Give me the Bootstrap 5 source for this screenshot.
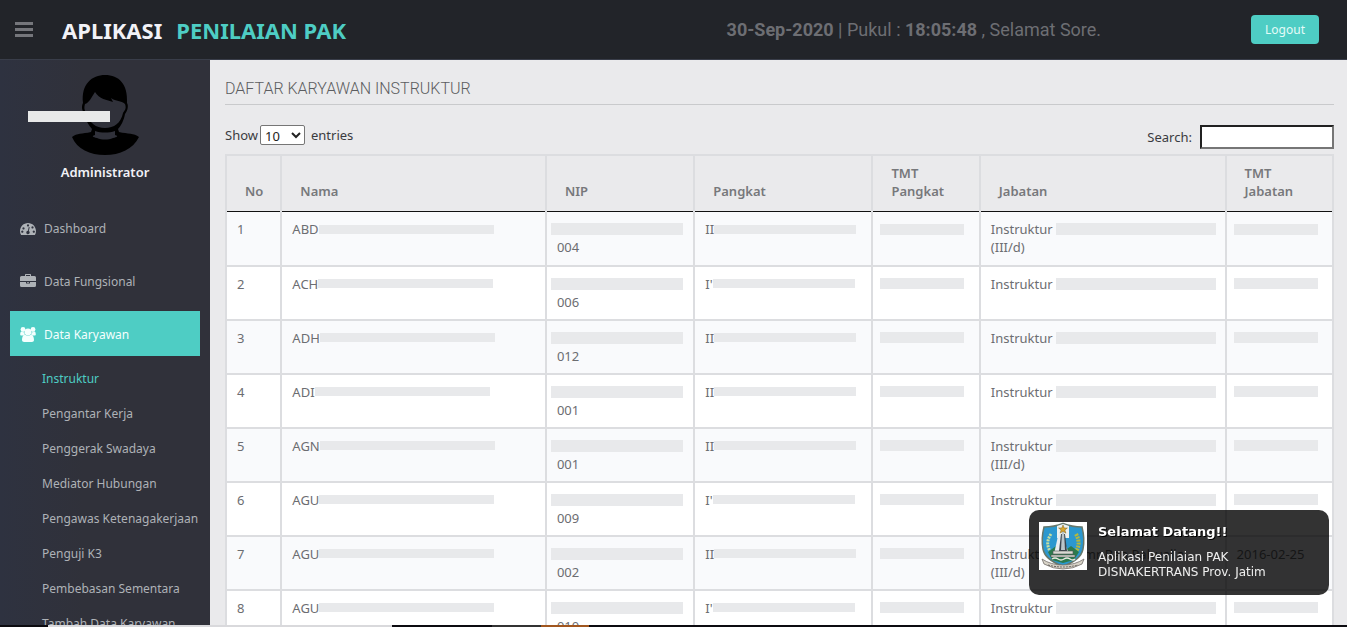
<!DOCTYPE html>
<html lang="id">
<head>
<meta charset="utf-8">
<meta name="viewport" content="width=device-width, initial-scale=1">
<title>Aplikasi Penilaian PAK</title>
<link href="https://cdn.jsdelivr.net/npm/bootstrap@5.3.0/dist/css/bootstrap.min.css" rel="stylesheet">
<style>
  :root { --accent: #4ecdc4; --side: #2f323a; --page: #eaeaec; --line: #dcdde0; }
  body { font-family: "Noto Sans", sans-serif; font-size: 13px; line-height: 18px; background: var(--page); color: #3a3b3f; }
  a { text-decoration: none; }

  .top-bar { height: 60px; background: #222429; border-bottom: 1px solid #393d49; padding: 0 28px 0 15px; }
  .menu-toggle { width: 18px; height: 15px; background: none; border: 0; padding: 0; }
  .menu-toggle span { display: block; height: 3px; background: #75767b; }
  .brand-name { font-size: 22px; font-weight: 700; line-height: 30px; color: #f2f2f7; margin-left: 29px; gap: 14px; }
  .brand-name b { color: var(--accent); font-weight: 700; }
  .clock { font-family: Roboto, sans-serif; font-size: 18px; line-height: 24px; color: #6d6e73; }
  .btn-logout { --bs-btn-bg: #4ecdc4; --bs-btn-color: #e4fbf8; --bs-btn-hover-bg: #3dbbb2; --bs-btn-hover-color: #fff;
    --bs-btn-font-size: 12px; --bs-btn-padding-x: 14px; --bs-btn-padding-y: 5px; line-height: 19px; margin-left: 150px; border: 0; border-radius: 4px; }

  .side-bar { width: 210px; background: linear-gradient(90deg, #2e3240, #30313a 40%); padding: 15px 10px 0; }
  .user-pic { height: 81px; }
  .name-mask { left: 18px; top: 36px; width: 82px; height: 11px; background: #e8e9e9; }
  .user-role { font-weight: 600; color: #f2f2f7; margin: 7px 0 24px; }
  .menu-link { height: 45px; padding: 2px 10px 0; gap: 8px; font-size: 12px; color: #aeb2b7; margin-bottom: 8px; }
  .menu-link svg { width: 16px; height: 16px; fill: currentColor; }
  .menu-link.active { background: var(--accent); color: #f4fffe; margin-bottom: 5px; }
  .sub-menu a { display: block; line-height: 35px; font-size: 12px; padding-left: 32px; white-space: nowrap; color: #aeb2b7; }
  .sub-menu a.active { color: var(--accent); }

  .content-area { padding: 19px 13px 0 15px; scrollbar-width: none; }
  .content-area::-webkit-scrollbar { display: none; }
  .page-title { font-family: Roboto, sans-serif; font-size: 16px; font-weight: 300; line-height: 20px; color: #5c5d60; padding-bottom: 5px; border-bottom: 1px solid #c9cacc; margin-bottom: 20px; }
  .len-label { gap: 2px; }
  .len-select { width: 45px; height: 20px; border: 1px solid #767676; border-radius: 2px; background: #fff; color: #222; padding: 0; }
  .find-box { width: 134px; height: 24px; border: 2px inset #767676; background: #fff; padding: 1px 2px; }

  .staff { table-layout: fixed; margin: 5px 0 0; border: 0; --bs-table-bg: transparent; }
  .staff > :not(caption) > * > * { border: 2px solid var(--line); color: #6c6d71; box-shadow: none; }
  .staff thead th { padding: 8px 18px 11px; border-bottom: 1px solid #111; vertical-align: bottom; font-weight: 600; color: #77787b; }
  .staff tbody td { padding: 8px 10px; height: 54px; background: #fff; }
  .staff tbody tr:nth-child(odd) td { background: #f9fafc; }
  .staff tbody tr:first-child td { border-top: 0; }
  .line-row { display: flex; align-items: center; height: 18px; white-space: nowrap; }
  .mask { background: #e8e9eb; flex: none; height: 11px; }
  .mask-name { width: 175px; height: 9px; }
  .mask-nip { width: 132px; height: 12px; margin-left: -6px; }
  .mask-rank { width: 142px; height: 9px; }
  .mask-date { width: 84px; margin-left: -3px; }
  .mask-post { width: 160px; height: 12px; margin-left: 3px; }

  .greet { right: 18px; bottom: 32px; width: 300px; height: 85px; padding: 12px 10px; gap: 11px; border-radius: 10px;
    background: rgba(0,0,0,.8); color: #eee; font: 11px/15px "DejaVu Sans", sans-serif; z-index: 20; }
  .greet h2 { font: 700 13px/20px "DejaVu Sans", sans-serif; margin: 0 0 8px; color: #fff; text-shadow: 1px 1px #000; }
  .greet p { font-size: 12px; white-space: nowrap; }
  .task-strip { height: 2px; background: #0c0b10; z-index: 30; }
  .task-strip i { display: block; }
</style>
</head>
<body class="vh-100 d-flex flex-column overflow-hidden">

<header class="top-bar d-flex align-items-center flex-shrink-0">
  <button class="menu-toggle d-flex flex-column justify-content-between" type="button" aria-label="Menu"><span class="w-100"></span><span class="w-100"></span><span class="w-100"></span></button>
  <a href="#" class="brand-name d-flex">APLIKASI <b>PENILAIAN PAK</b></a>
  <div class="clock ms-auto"><b>30-Sep-2020</b> | Pukul : <b>18:05:48</b> , Selamat Sore.</div>
  <button class="btn btn-logout" type="button">Logout</button>
</header>

<div class="d-flex flex-grow-1 overflow-hidden">
  <nav class="side-bar flex-shrink-0 overflow-hidden">
    <div class="user-pic position-relative text-center">
      <svg width="80" height="80" viewBox="0 0 80 80" aria-hidden="true">
        <path d="M19 38C16 34 17 30 18 28C16 9 27 0 40 0C54 0 63 9 62 28C64 31 62 37 60 39C59 45 56 51 53 54L54 57C63 59 69 58 74 62C68 74 55 80 40 80C25 80 12 74 7 62C12 58 17 59 26 57L27 54C23 50 21 45 19 38Z"/>
        <path fill="#30313a" d="M20 29C24 28 26 23 30 17C34 24 42 25 48 27L46 23C51 27 56 25 60 29C62 34 59 36 58 38C56 48 49 53 40 53C31 53 24 48 22 38C19 36 19 32 20 29Z"/>
        <path fill="#30313a" d="M30 56C36 58 44 58 50 56L50 60C54 61 52 62 48 63C43 65 37 65 32 63C28 62 26 61 30 60Z"/>
      </svg>
      <span class="name-mask position-absolute"></span>
    </div>
    <div class="user-role text-center">Administrator</div>
    <a href="#" class="menu-link d-flex align-items-center">
      <svg viewBox="0 0 16 16"><path fill-rule="evenodd" d="M8 2C3.600 2 0 5.600 0 10c0 1.500.4 2.900 1.100 4h13.800c.7-1.100 1.100-2.500 1.100-4 0-4.400-3.600-8-8-8zM3.500 6.300a1.100 1.100 0 1 0 .01 0zM8 3.300a1.100 1.100 0 1 0 .01 0zM12.500 5.300a1.100 1.100 0 1 0 .01 0zM2.300 9.500a1.100 1.100 0 1 0 .01 0zM13.800 9.500a1.100 1.100 0 1 0 .01 0zM8.800 6.100l.9.200-.9 3.700a1.700 1.700 0 1 1-.9-.2z"/></svg>Dashboard</a>
    <a href="#" class="menu-link d-flex align-items-center">
      <svg viewBox="0 0 16 16"><path fill-rule="evenodd" d="M5 2V.5L5.500 0h5l.5.500V2h3.500A1.500 1.500 0 0 1 16 3.500V7H0V3.500A1.500 1.500 0 0 1 1.500 2zM6 2h4V1H6zM0 8h6v1.500h4V8h6v3.500a1.500 1.500 0 0 1-1.500 1.500h-13A1.500 1.500 0 0 1 0 11.500zM7 8h2v.7H7z"/></svg>Data Fungsional</a>
    <a href="#" class="menu-link active d-flex align-items-center">
      <svg viewBox="0 0 16 16"><circle cx="3" cy="2.500" r="2.400"/><circle cx="13" cy="2.500" r="2.400"/><circle cx="8" cy="5" r="3.400"/><path d="M.2 7.500C.2 5.500.8 4.500 1.600 4.500c1 .8 1.900.8 2.800.4-.1 1.200.2 2 .9 2.700-.8 0-1.500.3-2 .9H1.500C.7 8.500.2 8.200.2 7.500zM15.800 7.500c0-2-.6-3-1.400-3-1 .8-1.900.8-2.800.4.1 1.200-.2 2-.9 2.700.8 0 1.500.3 2 .9h1.800c.8 0 1.300-.3 1.300-1zM2 13C2 10.300 3 7.800 5.100 7.800c1.800 1.400 4 1.400 5.800 0 2.100 0 3.100 2.500 3.100 5.200 0 1.200-.9 2-2.100 2H4.100C2.900 15 2 14.200 2 13z"/></svg>Data Karyawan</a>
    <div class="sub-menu">
      <a href="#" class="active">Instruktur</a>
      <a href="#">Pengantar Kerja</a>
      <a href="#">Penggerak Swadaya</a>
      <a href="#">Mediator Hubungan</a>
      <a href="#">Pengawas Ketenagakerjaan</a>
      <a href="#">Penguji K3</a>
      <a href="#">Pembebasan Sementara</a>
      <a href="#">Tambah Data Karyawan</a>
    </div>
  </nav>

  <main class="content-area flex-grow-1 overflow-auto">
    <h1 class="page-title">DAFTAR KARYAWAN INSTRUKTUR</h1>
    <div class="d-flex justify-content-between align-items-start">
      <label class="len-label d-flex align-items-center">Show
        <select class="len-select"><option>10</option><option>25</option><option>50</option><option>100</option></select>
        <span class="ms-1">entries</span></label>
      <label class="d-flex align-items-center gap-2">Search: <input type="search" class="find-box"></label>
    </div>
    <table class="table table-bordered staff">
      <colgroup><col style="width:5%"><col style="width:23.9%"><col style="width:13.4%"><col style="width:16.1%"><col style="width:9.7%"><col style="width:22.2%"><col style="width:9.7%"></colgroup>
      <thead><tr><th>No</th><th>Nama</th><th>NIP</th><th>Pangkat</th><th>TMT Pangkat</th><th>Jabatan</th><th>TMT Jabatan</th></tr></thead>
      <tbody id="rows"></tbody>
    </table>
  </main>
</div>

<aside class="greet position-fixed d-flex" role="status">
  <svg width="48" height="48" viewBox="0 0 48 48" class="flex-shrink-0" aria-hidden="true">
    <path fill="#fff" d="M0 0h48v48H0z"/>
    <path fill="#2b98cf" stroke="#66776a" stroke-width="1.500" d="M5 5Q15 5 24 1.500Q33 5 43 5Q46 17 44 27Q42 38 24 44Q6 38 4 27Q2 17 5 5Z"/>
    <path fill="#eef2ef" d="M18 4L24 2L30 4V16H18Z"/>
    <path fill="#d6a62c" stroke="#7c6120" stroke-width=".5" d="M24 3l1.200 3h3.200l-2.500 2 1 3.200-2.900-2-2.900 2 1-3.200-2.500-2h3.200z"/>
    <path fill="none" stroke="#c8df9f" stroke-width="3" stroke-dasharray="2 1" d="M12 12Q5 22 13 32"/>
    <path fill="none" stroke="#b6b83b" stroke-width="4" stroke-dasharray="2 1" d="M37 12Q43 23 35 32"/>
    <path fill="#2c7a4d" d="M9 30L17 24L24 30L32 24L40 30L35 38L24 41L13 38Z"/>
    <path fill="#e9edf0" d="M19 14L22 11L30 32H15Z"/>
    <path fill="#39444d" d="M22 12h4l2 17h-8z"/><path fill="#b9c5ca" d="M23 10h2l1 18h-4z"/>
    <path fill="#d9dad3" stroke="#555" stroke-width=".6" d="M14 29h20v3H14zM12 33h24v2H12z"/>
    <path fill="none" stroke="#e8e8e0" stroke-width="1.500" d="M13 37q3-2 6 0t6 0 6 0 5 0"/>
    <path fill="#d8d3c7" stroke="#726d69" stroke-width=".8" d="M3 37Q12 43 24 43Q36 43 45 37L43 42Q34 47 24 47Q14 47 5 42Z"/>
    <path stroke="#67625e" stroke-dasharray="2 1" d="M9 43Q24 47 39 43" fill="none"/>
  </svg>
  <div><h2>Selamat Datang!!</h2><p class="m-0">Aplikasi Penilaian PAK<br>DISNAKERTRANS Prov. Jatim</p></div>
</aside>

<footer class="task-strip d-flex flex-shrink-0"><i style="width:48px"></i><i style="width:344px;background:#d9d9dc"></i><i style="width:100px"></i><i style="width:49px;background:#333"></i><i style="width:48px;background:#a0561f"></i></footer>

<script src="https://cdn.jsdelivr.net/npm/bootstrap@5.3.0/dist/js/bootstrap.bundle.min.js"></script>
<script>
  // name, last digits of NIP, rank, grade on the second line, post, date of post
  const staff = [
    ["ABD", "004", "II", "(III/d)"],
    ["ACH", "006", "I'", ""],
    ["ADH", "012", "II", ""],
    ["ADI", "001", "II", ""],
    ["AGN", "001", "II", "(III/d)"],
    ["AGU", "009", "I'", ""],
    ["AGU", "002", "II", "(III/d)", "Keramr Ran Pahualia", "2016-02-25"],
    ["AGU", "010", "I'", ""]
  ];
  const mask = kind => `<span class="mask mask-${kind}"></span>`;
  const line = html => `<div class="line-row">${html}</div>`;
  document.getElementById("rows").innerHTML = staff.map(([name, nip, rank, grade, post, date], i) => `<tr>
    <td>${i + 1}</td>
    <td>${line(name + mask("name"))}</td>
    <td>${line(mask("nip"))}${line(nip)}</td>
    <td>${line(rank + mask("rank"))}</td>
    <td>${line(mask("date"))}</td>
    <td>${line("Instruktur" + (post ? "&nbsp;" + post : mask("post")))}${grade ? line(grade) : ""}</td>
    <td>${line(date || mask("date"))}</td></tr>`).join("");
</script>
</body>
</html>
